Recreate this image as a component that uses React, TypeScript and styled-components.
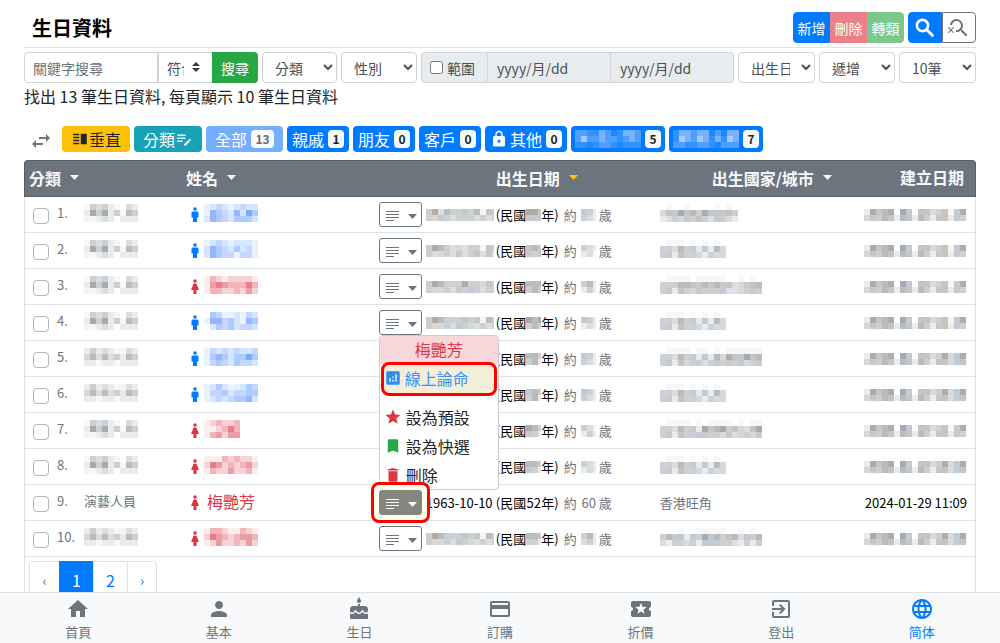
import React from "react";
import styled, { createGlobalStyle, css } from "styled-components";
import {
  MdAnalytics,
  MdBookmark,
  MdCake,
  MdCreditCard,
  MdDelete,
  MdEditNote,
  MdExitToApp,
  MdHome,
  MdLanguage,
  MdLocalActivity,
  MdLock,
  MdPerson,
  MdSearchOff,
  MdStar,
  MdSwapHoriz,
  MdVerticalSplit,
} from "react-icons/md";

const color = {
  primary: "#007bff",
  danger: "#dc3545",
  success: "#28a745",
  warning: "#ffc107",
  info: "#17a2b8",
  grey: "#6c757d",
  line: "#dee2e6",
  field: "#ced4da",
  text: "#495057",
  light: "#f8f9fa",
  dark: "#212529",
};

const GlobalStyle = createGlobalStyle`
  *, *::before, *::after { box-sizing: border-box; }
  body { margin: 0; background: #fff; }
  body, button, input, select {
    font-family: "Noto Sans CJK TC", "Noto Sans", sans-serif;
  }
  button { cursor: pointer; }
`;

/* ---------- page shell ---------- */

const Shell = styled.div`
  display: flex;
  flex-direction: column;
  height: 100vh;
  color: ${color.dark};
  font-size: 16px;
  line-height: 24px;
`;

const Main = styled.main`
  flex: 1;
  min-height: 0;
  overflow-y: auto;
  scrollbar-width: none;
  padding: 0 24px;
`;

const TitleBar = styled.header`
  display: flex;
  align-items: center;
  justify-content: space-between;
  height: 48px;
  padding: 8px 0 0 8px;
  border-bottom: 1px solid ${color.line};
`;

const Title = styled.h1`
  margin: 0;
  color: #000;
  font-size: 20px;
  line-height: 24px;
  font-weight: 700;
`;

const Row = styled.div<{ $gap?: number }>`
  display: flex;
  align-items: center;
  gap: ${(p) => p.$gap ?? 0}px;
`;

const ToolButton = styled.button<{ $bg: string; $border?: string; $fg?: string; $edge?: "left" | "right" }>`
  display: flex;
  align-items: center;
  justify-content: center;
  width: 37px;
  height: 31px;
  padding: 0;
  border: 1px solid ${(p) => p.$border ?? p.$bg};
  border-radius: ${(p) => (p.$edge === "left" ? "4px 0 0 4px" : p.$edge === "right" ? "0 4px 4px 0" : "0")};
  background: ${(p) => p.$bg};
  color: ${(p) => p.$fg ?? "#fff"};
  font-size: 14px;
  line-height: 20px;
`;

const IconToolButton = styled(ToolButton)`
  width: 34px;
`;

/* ---------- filters ---------- */

const Filters = styled.form`
  display: flex;
  gap: 4px;
  margin-top: 4px;
`;

const fieldBox = css`
  min-width: 0;
  height: 31px;
  border: 1px solid ${color.field};
  background-color: #fff;
  color: ${color.text};
  font-size: 14px;
  line-height: 20px;
`;

const Group = styled.div<{ $size: number }>`
  display: flex;
  flex: ${(p) => p.$size} 1 ${(p) => p.$size}px;
  min-width: 0;
`;

const Select = styled.select<{ $size: number }>`
  ${fieldBox}
  flex: ${(p) => p.$size} 1 ${(p) => p.$size}px;
  padding: 4px 8px;
  border-radius: 4px;
`;

const Keyword = styled.input`
  ${fieldBox}
  flex: 1;
  padding: 4px 8px;
  border-radius: 4px 0 0 4px;
  &::placeholder { color: ${color.grey}; opacity: 1; }
`;

const MatchWrap = styled.div`
  position: relative;
  display: flex;
  width: 54px;
  svg {
    position: absolute;
    right: 12px;
    top: 10px;
    pointer-events: none;
  }
`;

const MatchSelect = styled.select`
  ${fieldBox}
  width: 100%;
  appearance: none;
  padding: 4px 28px 4px 8px;
  border-right: 0;
`;

const SearchButton = styled.button`
  width: 46px;
  height: 31px;
  padding: 0;
  border: 0;
  border-radius: 0 4px 4px 0;
  background: ${color.success};
  color: #fff;
  font-size: 14px;
`;

const RangeLabel = styled.label`
  ${fieldBox}
  display: flex;
  align-items: center;
  gap: 4px;
  width: 67px;
  padding: 0 8px;
  border-radius: 4px 0 0 4px;
  background: #e9ecef;
  white-space: nowrap;
  input { margin: 0; }
`;

const DateField = styled.input`
  ${fieldBox}
  flex: 1;
  padding: 4px 9px;
  border-left: 0;
  background: #e9ecef;
  &:last-child { border-radius: 0 4px 4px 0; }
`;

const Summary = styled.p`
  margin: 1px 0 18px;
`;

/* ---------- tags ---------- */

const Tags = styled.div`
  display: flex;
  align-items: center;
  gap: 4px;
  height: 26px;
  margin-bottom: 8px;
`;

const SwapButton = styled.button`
  display: flex;
  width: 34px;
  padding: 4px 0 0 5px;
  border: 0;
  background: none;
  color: ${color.grey};
`;

const Tag = styled.button<{ $bg: string; $fg?: string; $pad?: number }>`
  display: flex;
  align-items: center;
  gap: 4px;
  height: 26px;
  padding: 0 ${(p) => p.$pad ?? 5}px;
  border: 0;
  border-radius: 4px;
  background: ${(p) => p.$bg};
  color: ${(p) => p.$fg ?? "#fff"};
  font-size: 16px;
  line-height: 24px;
  white-space: nowrap;
`;

const TagText = styled.span`
  display: flex;
  align-items: center;
`;

const LockMark = styled(MdLock)`
  margin-right: 2px;
`;

const Badge = styled.span<{ $wide?: boolean }>`
  min-width: ${(p) => (p.$wide ? 23 : 16)}px;
  padding: 0 4px;
  border-radius: 4px;
  background: ${color.light};
  color: ${(p) => (p.$wide ? "#6a6d70" : color.dark)};
  font-size: 12px;
  line-height: 18px;
  font-weight: 700;
  text-align: center;
`;

/* ---------- table ---------- */

const Table = styled.table`
  width: 100%;
  table-layout: fixed;
  border-collapse: separate;
  border-spacing: 0;
`;

const Th = styled.th<{ $pad: number; $end?: boolean }>`
  height: 37px;
  padding: ${(p) => (p.$end ? "0 11px 4px 0" : `0 0 2px ${p.$pad}px`)};
  border: 0 solid #565e66;
  border-width: 1px 0;
  background: ${color.grey};
  color: ${color.light};
  text-align: ${(p) => (p.$end ? "right" : "left")};
  font-size: 16px;
  line-height: 24px;
  font-weight: 700;
  &:first-child { border-top-left-radius: 4px; border-left-width: 1px; }
  &:last-child { border-top-right-radius: 4px; border-right-width: 1px; }
`;

const SortButton = styled.button`
  display: flex;
  align-items: center;
  gap: 9px;
  padding: 0;
  border: 0;
  background: none;
  color: inherit;
  font-size: 16px;
  line-height: 24px;
  font-weight: 700;
  white-space: nowrap;
`;

const Td = styled.td<{ $end?: boolean; $muted?: boolean }>`
  height: 36px;
  padding: ${(p) => (p.$end ? "0 8px 0 5px" : "0 5px")};
  border-bottom: 1px solid ${color.line};
  color: ${(p) => (p.$muted ? color.grey : "#000")};
  text-align: ${(p) => (p.$end ? "right" : "left")};
  font-size: 13px;
  line-height: 18px;
  white-space: nowrap;
  &:first-child { border-left: 1px solid ${color.line}; padding-left: 8px; }
  &:last-child { border-right: 1px solid ${color.line}; }
`;

const Check = styled.input`
  appearance: none;
  width: 16px;
  height: 16px;
  margin: 2px 8px 0 0;
  border: 1px solid #adb5bd;
  border-radius: 4px;
  background: #fff;
`;

const Number = styled.span`
  width: 27px;
  padding-bottom: 4px;
`;

const Category = styled.span`
  display: flex;
  padding-bottom: 4px;
`;

const NameCell = styled.div<{ $female: boolean }>`
  display: flex;
  align-items: center;
  gap: 5px;
  padding-left: 5px;
  color: ${(p) => (p.$female ? color.danger : color.primary)};
  font-size: 16px;
  line-height: 24px;
`;

const NameText = styled.span`
  padding: 0 0 3px 3px;
`;

const Lift = styled.span`
  display: flex;
  padding-bottom: 4px;
`;

const BirthDate = styled.span`
  display: inline-flex;
  width: 70px;
  margin-left: 4px;
`;

const EraYear = styled.span`
  display: inline-flex;
  justify-content: center;
  width: 15px;
`;

const Age = styled.span`
  display: inline-flex;
  align-items: center;
  margin-left: 5px;
  color: ${color.grey};
`;

const AgeValue = styled.span`
  display: inline-flex;
  justify-content: center;
  width: 22px;
  padding-left: 2px;
`;

const MenuAnchor = styled.div`
  position: relative;
  flex: none;
`;

const MenuButton = styled.button<{ $open?: boolean }>`
  display: flex;
  align-items: center;
  justify-content: space-between;
  width: 43px;
  height: 25px;
  padding: 3px 4px 0 6px;
  border: 1px solid ${(p) => (p.$open ? "#85867d" : color.grey)};
  border-radius: 3px;
  background: ${(p) => (p.$open ? "#85867d" : "#fff")};
  color: ${(p) => (p.$open ? "#fff" : color.grey)};
`;

const Menu = styled.div`
  position: absolute;
  left: 0;
  bottom: 100%;
  z-index: 2;
  width: 120px;
  height: 155px;
  overflow: hidden;
  border: 1px solid #ccc;
  border-radius: 4px;
  background: #fff;
`;

const MenuTitle = styled.div`
  height: 28px;
  background: #f8d7da;
  color: ${color.danger};
  font-size: 16px;
  line-height: 26px;
  text-align: center;
`;

const MenuItem = styled.button<{ $icon: string }>`
  display: flex;
  align-items: center;
  gap: 4px;
  width: 100%;
  height: 29px;
  padding: 0 4px 2px;
  border: 0;
  background: none;
  color: ${color.dark};
  font-size: 16px;
  line-height: 24px;
  svg { color: ${(p) => p.$icon}; }
`;

const FeaturedItem = styled(MenuItem)`
  gap: 3px;
  width: 116px;
  height: 34px;
  margin: -2px 0 7px 1px;
  padding: 0 0 2px;
  border: 3px solid #f00;
  border-radius: 8px;
  background: #f2eeda;
  color: #3d93ee;
`;

const ActiveRing = styled.span`
  position: absolute;
  inset: -8px;
  z-index: 3;
  border: 3px solid #f00;
  border-radius: 8px;
  box-shadow: inset 0 0 0 5px #fefeef;
  pointer-events: none;
`;

const Footer = styled.div`
  padding: 4px 4px 16px;
  border: 1px solid ${color.line};
  border-top: 0;
`;

const Pages = styled.nav`
  display: flex;
`;

const PageLink = styled.a<{ $active?: boolean; $muted?: boolean; $small?: boolean; $width: number }>`
  width: ${(p) => p.$width}px;
  height: 38px;
  margin-left: -1px;
  border: 1px solid ${(p) => (p.$active ? color.primary : color.line)};
  background: ${(p) => (p.$active ? color.primary : "#fff")};
  color: ${(p) => (p.$active ? "#fff" : p.$muted ? color.grey : color.primary)};
  font-size: ${(p) => (p.$small ? 14 : 16)}px;
  line-height: 37px;
  text-align: center;
  text-decoration: none;
  &:first-child { margin-left: 0; border-radius: 4px 0 0 4px; }
  &:last-child { border-radius: 0 4px 4px 0; }
`;

/* ---------- bottom navigation ---------- */

const BottomNav = styled.nav`
  display: flex;
  flex: none;
  height: 51px;
  padding: 0 8px;
  border-top: 1px solid ${color.line};
  background: ${color.light};
`;

const NavLink = styled.a<{ $active?: boolean }>`
  display: flex;
  flex: 1;
  flex-direction: column;
  align-items: center;
  gap: 1px;
  padding-top: 4px;
  color: ${(p) => (p.$active ? color.primary : color.grey)};
  font-size: 13px;
  line-height: 20px;
  text-decoration: none;
`;

/* ---------- drawings ---------- */

const tone: Record<string, string> = {
  a: "#f7f7f7", b: "#e9ebec", c: "#dcdddd", d: "#cdd0d2", e: "#b8bcbe", f: "#a6abb2",
  w: "#faf3ee", p: "#dfd5d0", q: "#c8c3c1", t: "#b3aca5", s: "#dbe0ea", h: "#c4cad4", u: "#d4dbde", g: "#c3c7c8",
  "1": "#e8f3ff", "2": "#d5e6ff", "3": "#c7d5ff", "4": "#aecbff", "5": "#98b4fb", "6": "#74aeff",
  K: "#fceeea", L: "#f8d2d6", M: "#f1b6bb", N: "#ea9da3", O: "#e87d86",
  v: "#1a88ff", x: "#2f92ff", y: "#4e9fff", z: "#78b2ff", Z: "#a3cbff",
};

const CELL = 6;

/* Censored text: a grid of flat blocks, one letter per block. */
function Mosaic({ rows, width }: { rows: string[]; width?: number }) {
  const w = width ?? rows[0].length * CELL;
  return (
    <svg width={w} height={rows.length * CELL} shapeRendering="crispEdges" aria-hidden="true">
      {rows.map((line, y) =>
        [...line].map((key, x) =>
          tone[key] ? (
            <rect key={`${x}-${y}`} x={x * CELL} y={y * CELL} width={CELL} height={CELL} fill={tone[key]} />
          ) : null
        )
      )}
    </svg>
  );
}

function Caret({ fill = "currentColor" }: { fill?: string }) {
  return (
    <svg width="9" height="5" viewBox="0 0 9 5" aria-hidden="true">
      <path d="M0 0h9L4.500 5z" fill={fill} />
    </svg>
  );
}

function SearchIcon() {
  return (
    <svg width="24" height="24" viewBox="0 0 24 24" fill="none" stroke="currentColor" aria-hidden="true">
      <circle cx="9.500" cy="9.500" r="5.600" strokeWidth="2.600" />
      <path d="M13.800 13.800L20.200 20.200" strokeWidth="3" />
    </svg>
  );
}

function LinesIcon() {
  return (
    <svg width="13" height="10" viewBox="0 0 13 10" aria-hidden="true" shapeRendering="crispEdges">
      <path d="M0 0h13v1H0zM0 3h13v1H0zM0 6h13v1H0zM0 9h8v1H0z" fill="currentColor" />
    </svg>
  );
}

function GenderIcon({ female }: { female: boolean }) {
  return (
    <svg width="8" height="15" viewBox="0 0 8 15" fill="currentColor" aria-hidden="true">
      <circle cx="4" cy="2" r="1.800" />
      {female ? (
        <path d="M3.200 4.500h1.600c.4 0 .7.200.8.600L8 11H5.500v4h-3v-4H0l2.400-5.900c.1-.4.4-.6.8-.6z" />
      ) : (
        <path d="M2 4.500h4c.9 0 1.500.6 1.500 1.500v4.500H6V15H2v-4.500H.5V6c0-.9.6-1.500 1.500-1.500z" />
      )}
    </svg>
  );
}

/* ---------- data ---------- */

const catA = ["adcdba.cb", "bfdfbdaed", "wabcb.bbb"];
const catB = ["bdbcbawcb", "pececdbed", "bbabbabbb"];
const stampA = ["btget.fh.qqudqwht.", "pgdeqbegbedbggbhd."];
const stampB = ["btget.fh.qqudtuht1", "pgdeqbegbedbgquhq1"];
const placeShort = [".aaa.a.a.a.", "ddcedhbhbeu", "dhbqddubduu"];

type Entry = {
  category?: string[];
  categoryText?: string;
  female?: boolean;
  name?: string[];
  nameText?: string;
  date?: string[];
  year?: string[];
  age?: string[];
  place?: string[];
  created?: string[];
};

const entries: Entry[] = [
  { category: catA, name: ["123212322", "154325264", "254324442"], date: ["dtceddgdewgd", "dphdcdddcdcd"], year: ["tth", "ghh"], age: ["hdb", "dcb"], place: [".a..a....a.a.", "uqhfgedfgggqd", "bcduhdqdchdcb"], created: stampA },
  { category: catA, name: ["123212221", "254324231", "254331331"], date: ["dtedcpsddwgd", "dcudchcdqcgc"], year: ["geh", "hdh"], age: ["dcb", "bca"], place: placeShort, created: stampA },
  { category: catA, female: true, name: ["KMLKLLLLK", "KNONMMMOM", "KMMLLMLNL"], date: ["dtedddtddpgd", "dpudchdhdcdd"], year: ["eee", "ded"], age: ["deb", "bdb"], place: [".aaaa.aaaaa..a.a.", "dddeeqhegehqsphqe", "dhbqdphdddhsspdhd"], created: stampA },
  { category: catA, name: [".43112132", "155342154", ".24342332"], date: ["dtedddgdgwed", "dpudchducdcd"], year: ["fef", "ded"], age: ["hdb", "bcb"], place: placeShort, created: stampA },
  { category: catB, name: ["132323223", "145424464", "134324332"], date: ["dtedddgdgwed", "dpudchducdcd"], year: ["eed", "deb"], age: ["hdb", "dcb"], place: [".aaaa.aa.a.aaaaaa", "ddcedhbhbeutqgfqe", "dhbquddcdhdhdhudh"], created: stampB },
  { category: catB, name: ["124211243", "133423344", "123234452"], date: ["dtedddgdgwed", "dpudchducdcd"], year: ["hed", "deb"], age: ["hdb", "dcb"], place: placeShort, created: stampB },
  { category: catA, female: true, name: ["KLMLLM", "KKLMOM", "KMNLNN"], date: ["dtedddgdgwed", "dpudchducdcd"], year: ["fed", "hdb"], age: ["dcw", "bdb"], place: [".aaaa.a.aaaa.a.aa", "ddcedhbfgefdqpcqf", "dhbqddhhdduhcpduh"], created: stampA },
  { category: catA, female: true, name: ["KKKMLMLLK", "LONLMLMNL", "KMLLNLLMK"], date: ["dtedddgdgwed", "dpudchducdcd"], year: ["eed", "hdb"], age: ["dcb", "bub"], place: placeShort, created: stampB },
  { categoryText: "演藝人員", female: true, nameText: "梅艷芳" },
  { category: catB, female: true, name: ["KMMLKKMLK", "LONMLMNNM", "KLNLLMLNL"], date: ["dtedddgdgwed", "dpudchducdcd"], year: ["eeg", "ddb"], age: ["deb", "cdb"], place: ["...a..aaaaa..a.a.", "dehgbhdfgedqechde", "cbddudbhhhddcbdbd"], created: stampB },
];

const columns = ["16.5%", "20.25%", "29.5%", "21.5%", "auto"];

const navItems = [
  { label: "首頁", Icon: MdHome },
  { label: "基本", Icon: MdPerson },
  { label: "生日", Icon: MdCake },
  { label: "訂購", Icon: MdCreditCard },
  { label: "折價", Icon: MdLocalActivity },
  { label: "登出", Icon: MdExitToApp },
  { label: "简体", Icon: MdLanguage, active: true },
];

/* ---------- pieces ---------- */

function RecordMenu() {
  return (
    <Menu role="menu">
      <MenuTitle>梅艷芳</MenuTitle>
      <FeaturedItem type="button" role="menuitem" $icon="#2f8cf0">
        <MdAnalytics size={18} />
        線上論命
      </FeaturedItem>
      <MenuItem type="button" role="menuitem" $icon={color.danger}>
        <MdStar size={18} />
        設為預設
      </MenuItem>
      <MenuItem type="button" role="menuitem" $icon={color.success}>
        <MdBookmark size={18} />
        設為快選
      </MenuItem>
      <MenuItem type="button" role="menuitem" $icon={color.danger}>
        <MdDelete size={18} />
        刪除
      </MenuItem>
    </Menu>
  );
}

function RecordRow({ entry, index }: { entry: Entry; index: number }) {
  const open = Boolean(entry.nameText);
  const female = Boolean(entry.female);
  return (
    <tr>
      <Td $muted>
        <Row>
          <Check type="checkbox" aria-label={`選取第 ${index} 筆`} />
          <Number>{index}.</Number>
          <Category>{entry.category ? <Mosaic rows={entry.category} /> : entry.categoryText}</Category>
        </Row>
      </Td>
      <Td>
        <NameCell $female={female}>
          <GenderIcon female={female} />
          {entry.name ? (
            <Lift>
              <Mosaic rows={entry.name} />
            </Lift>
          ) : (
            <NameText>{entry.nameText}</NameText>
          )}
        </NameCell>
      </Td>
      <Td>
        <Row>
          <MenuAnchor>
            <MenuButton type="button" $open={open} aria-label="操作" aria-haspopup="menu" aria-expanded={open}>
              <LinesIcon />
              <Caret />
            </MenuButton>
            {open && <RecordMenu />}
            {open && <ActiveRing />}
          </MenuAnchor>
          <BirthDate>{entry.date ? <Mosaic rows={entry.date} width={68} /> : "1963-10-10"}</BirthDate>
          (民國
          <EraYear>{entry.year ? <Mosaic rows={entry.year} width={15} /> : "52"}</EraYear>
          年)
          <Age>
            約<AgeValue>{entry.age ? <Mosaic rows={entry.age} width={15} /> : "60"}</AgeValue>歲
          </Age>
        </Row>
      </Td>
      <Td $muted>
        {entry.place ? (
          <Lift>
            <Mosaic rows={entry.place} />
          </Lift>
        ) : (
          "香港旺角"
        )}
      </Td>
      <Td $end>{entry.created ? <Row><Mosaic rows={entry.created} /></Row> : "2024-01-29 11:09"}</Td>
    </tr>
  );
}

export default function App() {
  return (
    <Shell lang="zh-Hant">
      <GlobalStyle />
      <Main>
        <TitleBar>
          <Title>生日資料</Title>
          <Row $gap={4}>
            <Row>
              <ToolButton type="button" $bg={color.primary} $edge="left">新增</ToolButton>
              <ToolButton type="button" $bg="#e9808a">刪除</ToolButton>
              <ToolButton type="button" $bg="#7ac98a" $edge="right">轉類</ToolButton>
            </Row>
            <Row>
              <IconToolButton type="button" $bg={color.primary} $edge="left" aria-label="搜尋">
                <SearchIcon />
              </IconToolButton>
              <IconToolButton type="button" $bg="#fff" $border={color.grey} $fg={color.grey} $edge="right" aria-label="清除搜尋">
                <MdSearchOff size={24} />
              </IconToolButton>
            </Row>
          </Row>
        </TitleBar>

        <Filters onSubmit={(e) => e.preventDefault()}>
          <Group $size={234}>
            <Keyword placeholder="關鍵字搜尋" aria-label="關鍵字搜尋" />
            <MatchWrap>
              <MatchSelect aria-label="比對方式">
                <option>符合</option>
              </MatchSelect>
              <svg width="8" height="10" viewBox="0 0 8 10" aria-hidden="true">
                <path d="M0 4l4-4 4 4zM0 6h8L4 10z" fill="#343a40" />
              </svg>
            </MatchWrap>
            <SearchButton>搜尋</SearchButton>
          </Group>
          <Select $size={75} aria-label="分類"><option>分類</option></Select>
          <Select $size={76} aria-label="性別"><option>性別</option></Select>
          <Group $size={313}>
            <RangeLabel>
              <input type="checkbox" />
              範圍
            </RangeLabel>
            <DateField readOnly value="yyyy/月/dd" aria-label="開始日期" />
            <DateField readOnly value="yyyy/月/dd" aria-label="結束日期" />
          </Group>
          <Select $size={77} aria-label="排序欄位"><option>出生日期</option></Select>
          <Select $size={76} aria-label="排序方式"><option>遞增</option></Select>
          <Select $size={77} aria-label="每頁筆數"><option>10筆</option></Select>
        </Filters>

        <Summary>找出 13 筆生日資料, 每頁顯示 10 筆生日資料</Summary>

        <Tags>
          <SwapButton type="button" aria-label="切換"><MdSwapHoriz size={24} /></SwapButton>
          <Tag type="button" $bg={color.warning} $fg={color.dark} $pad={9}>
            <TagText><MdVerticalSplit size={18} />垂直</TagText>
          </Tag>
          <Tag type="button" $bg={color.info} $pad={9}>
            <TagText>分類<MdEditNote size={18} /></TagText>
          </Tag>
          <Tag type="button" $bg="#73aeff" $pad={9}>全部 <Badge $wide>13</Badge></Tag>
          <Tag type="button" $bg={color.primary}>親戚 <Badge>1</Badge></Tag>
          <Tag type="button" $bg={color.primary}>朋友 <Badge>0</Badge></Tag>
          <Tag type="button" $bg={color.primary}>客戶 <Badge>0</Badge></Tag>
          <Tag type="button" $bg={color.primary}>
            <TagText><LockMark size={18} />其他</TagText> <Badge>0</Badge>
          </Tag>
          <Tag type="button" $bg={color.primary} $pad={4}>
            <Mosaic rows={["yyxxzyvxzzy", "yZyyzyyxyzy", "xxvxyyxvxxx"]} /><Badge>5</Badge>
          </Tag>
          <Tag type="button" $bg={color.primary} $pad={4}>
            <Mosaic rows={["xzzyzzvyvzz", "xZzyZzxzxZz", "yyxxyyxvyyy"]} /><Badge>7</Badge>
          </Tag>
        </Tags>

        <Table>
          <colgroup>
            {columns.map((width, i) => <col key={i} style={{ width }} />)}
          </colgroup>
          <thead>
            <tr>
              <Th $pad={4}><SortButton type="button">分類<Caret /></SortButton></Th>
              <Th $pad={5}><SortButton type="button">姓名<Caret /></SortButton></Th>
              <Th $pad={122}><SortButton type="button">出生日期<Caret fill={color.warning} /></SortButton></Th>
              <Th $pad={57}><SortButton type="button">出生國家/城市<Caret /></SortButton></Th>
              <Th $pad={0} $end>建立日期</Th>
            </tr>
          </thead>
          <tbody>
            {entries.map((entry, i) => <RecordRow key={i} entry={entry} index={i + 1} />)}
          </tbody>
        </Table>

        <Footer>
          <Pages aria-label="分頁">
            <PageLink href="#prev" $width={31} $muted $small>‹</PageLink>
            <PageLink href="#1" $width={35} $active>1</PageLink>
            <PageLink href="#2" $width={35}>2</PageLink>
            <PageLink href="#next" $width={30} $small>›</PageLink>
          </Pages>
        </Footer>
      </Main>

      <BottomNav>
        {navItems.map(({ label, Icon, active }) => (
          <NavLink key={label} href="#" $active={active}>
            <Icon size={24} />
            {label}
          </NavLink>
        ))}
      </BottomNav>
    </Shell>
  );
}
